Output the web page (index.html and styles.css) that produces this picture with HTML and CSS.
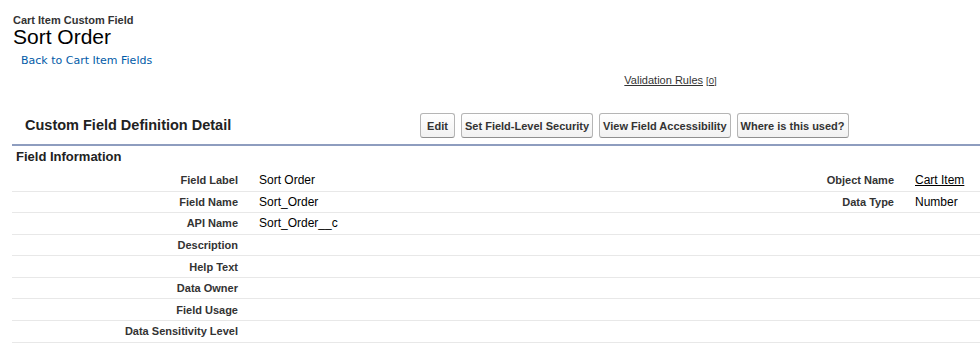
FILE: index.html
```html
<!DOCTYPE html>
<html>
<head>
<meta charset="utf-8">
<title>Sort Order</title>
<link rel="stylesheet" href="styles.css">
</head>
<body>
<div class="page">
  <div class="page-head">
    <div class="type">Cart Item Custom Field</div>
    <h1 class="title">Sort Order</h1>
    <div class="back-wrap"><a class="back" href="#">Back to Cart Item Fields</a></div>
  </div>
  <div class="related">
    <a class="rel-link" href="#">Validation Rules</a> <span class="count">[<u>0</u>]</span>
  </div>
  <div class="detail">
    <div class="pb-header">
      <h2 class="pb-title">Custom Field Definition Detail</h2>
      <div class="pb-buttons">
        <button class="btn btn-edit">Edit</button>
        <button class="btn">Set Field-Level Security</button>
        <button class="btn">View Field Accessibility</button>
        <button class="btn">Where is this used?</button>
      </div>
    </div>
    <h3 class="section">Field Information</h3>
    <div class="rows">
      <div class="row">
        <div class="label">Field Label</div><div class="data">Sort Order</div>
        <div class="label">Object Name</div><div class="data"><a class="obj" href="#">Cart Item</a></div>
      </div>
      <div class="row">
        <div class="label">Field Name</div><div class="data">Sort_Order</div>
        <div class="label">Data Type</div><div class="data">Number</div>
      </div>
      <div class="row">
        <div class="label">API Name</div><div class="data">Sort_Order__c</div>
        <div class="label"></div><div class="data"></div>
      </div>
      <div class="row">
        <div class="label">Description</div><div class="data"></div>
        <div class="label"></div><div class="data"></div>
      </div>
      <div class="row">
        <div class="label">Help Text</div><div class="data"></div>
        <div class="label"></div><div class="data"></div>
      </div>
      <div class="row">
        <div class="label">Data Owner</div><div class="data"></div>
        <div class="label"></div><div class="data"></div>
      </div>
      <div class="row">
        <div class="label">Field Usage</div><div class="data"></div>
        <div class="label"></div><div class="data"></div>
      </div>
      <div class="row">
        <div class="label">Data Sensitivity Level</div><div class="data"></div>
        <div class="label"></div><div class="data"></div>
      </div>
    </div>
  </div>
</div>
</body>
</html>
```

FILE: styles.css
```css
html, body {
  margin: 0;
  padding: 0;
  background: #fff;
}
body {
  font-family: "Liberation Sans", Arial, sans-serif;
  color: #000;
}
.page {
  width: 100%;
}
.page-head {
  padding: 14px 0 0 13px;
}
.type {
  font-size: 11px;
  font-weight: bold;
  line-height: 12px;
  color: #333;
}
.title {
  margin: 0;
  font-size: 21px;
  font-weight: normal;
  line-height: 22px;
  color: #000;
}
.back-wrap {
  margin: 6px 0 0 8px;
  font-family: "DejaVu Sans", Verdana, sans-serif;
  font-size: 11px;
  line-height: 14px;
}
.back {
  color: #015ba7;
  text-decoration: none;
}
.related {
  margin: 5px 0 0 12px;
  padding-left: 349px;
  text-align: center;
  font-size: 11px;
  line-height: 14px;
  color: #333;
}
.rel-link {
  color: #333;
  text-decoration: underline;
}
.count {
  font-size: 9.5px;
}
.detail {
  margin: 20px 0 0 12px;
}
.pb-header {
  display: flex;
  align-items: center;
  height: 36px;
  border-bottom: 2px solid #8e9dbf;
}
.pb-title {
  margin: 0;
  width: 408px;
  box-sizing: border-box;
  padding: 0 0 2px 13px;
  font-size: 14.5px;
  font-weight: bold;
  color: #222;
}
.pb-buttons {
  display: flex;
  gap: 6px;
  margin-bottom: 1px;
}
.btn {
  height: 25px;
  padding: 0 3px;
  font-family: "Liberation Sans", Arial, sans-serif;
  font-size: 11px;
  font-weight: bold;
  color: #333;
  background: linear-gradient(#ffffff, #f1f1f1);
  border: 1px solid #b5b5b5;
  border-bottom-color: #8f8f8f;
  border-radius: 3px;
}
.btn-edit {
  min-width: 35px;
}
.section {
  margin: 0;
  height: 24px;
  padding-left: 4px;
  font-size: 13px;
  font-weight: bold;
  line-height: 21px;
  color: #222;
}
.row {
  display: grid;
  grid-template-columns: 236px 420px 236px 1fr;
  align-items: center;
  height: 21.57px;
  box-sizing: border-box;
  border-bottom: 1px solid #e8e8e8;
}
.label {
  text-align: right;
  padding-right: 10px;
  font-size: 11px;
  font-weight: bold;
  color: #333;
}
.data {
  padding-left: 11px;
  font-size: 12px;
  color: #000;
}
.obj {
  color: #000;
  text-decoration: underline;
}
```
